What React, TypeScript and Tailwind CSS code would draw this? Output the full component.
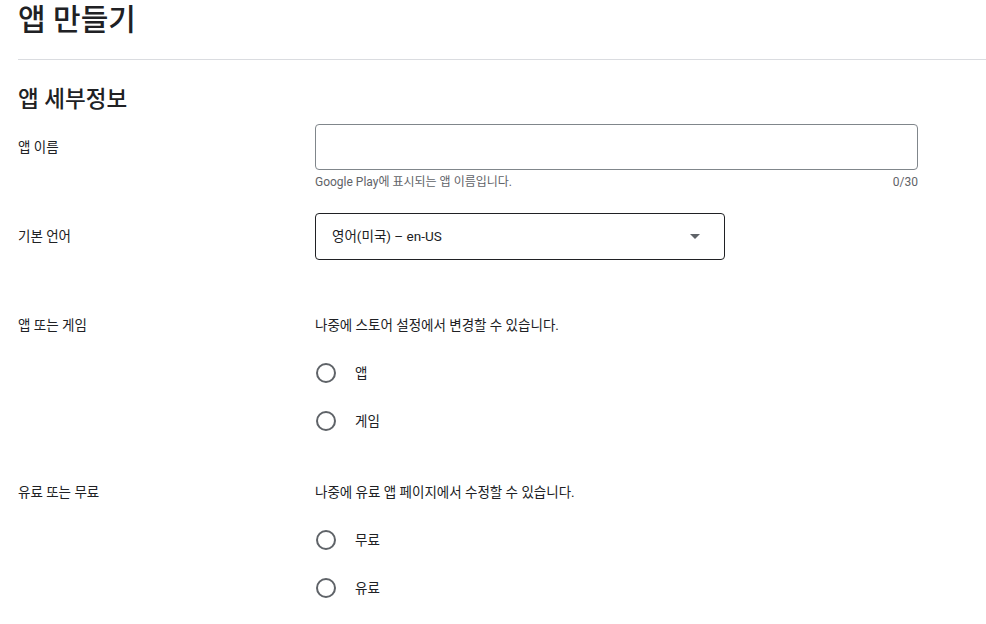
import React from "react";

const font = { fontFamily: '"Roboto", "Noto Sans CJK KR", sans-serif' };

function Radio({ label }: { label: string }) {
  return (
    <label className="flex h-12 items-center">
      <span className="ml-px flex h-5 w-5 items-center justify-center rounded-full border-2 border-[#5f6368]" />
      <span className="ml-[19px] text-[13.5px] text-[#202124]">{label}</span>
    </label>
  );
}

function Row({
  label,
  children,
  labelClass = "",
}: {
  label: string;
  children: React.ReactNode;
  labelClass?: string;
}) {
  return (
    <div className="flex">
      <div className={`w-[297px] shrink-0 text-[13.5px] leading-5 text-[#202124] ${labelClass}`}>{label}</div>
      <div className="flex-1">{children}</div>
    </div>
  );
}

export default function App() {
  return (
    <div className="min-h-screen bg-white pl-[18px] text-[#202124]" style={font}>
      <h1 className="h-10 text-[30px] leading-10 font-medium">앱 만들기</h1>
      <div className="mt-[19px] h-px bg-[#dadce0]" />

      <h2 className="mt-[25px] text-[22.5px] leading-7 font-medium">앱 세부정보</h2>

      <div className="mt-[11px]">
        <Row label="앱 이름" labelClass="pt-[13px]">
          <div className="w-[603px]">
            <input
              type="text"
              className="block h-[46px] w-full rounded border border-[#80868b] px-4 text-sm outline-none"
            />
            <div className="mt-1 flex justify-between text-xs leading-4 text-[#5f6368]">
              <span>Google Play에 표시되는 앱 이름입니다.</span>
              <span>0/30</span>
            </div>
          </div>
        </Row>
      </div>

      <div className="mt-[23px]">
        <Row label="기본 언어" labelClass="pt-[13px]">
          <div className="flex h-[47px] w-[410px] items-center justify-between rounded border border-[#202124] pr-6 pl-4">
            <span className="text-[13.5px]">영어(미국) – en-US</span>
            <svg width="10" height="5" viewBox="0 0 10 5">
              <path d="M0 0 L10 0 L5 5 Z" fill="#5f6368" />
            </svg>
          </div>
        </Row>
      </div>

      <div className="mt-[55px]">
        <Row label="앱 또는 게임">
          <p className="text-[13.5px] leading-5">나중에 스토어 설정에서 변경할 수 있습니다.</p>
          <div className="mt-[14px]">
            <Radio label="앱" />
            <Radio label="게임" />
          </div>
        </Row>
      </div>

      <div className="mt-[37px]">
        <Row label="유료 또는 무료">
          <p className="text-[13.5px] leading-5">나중에 유료 앱 페이지에서 수정할 수 있습니다.</p>
          <div className="mt-[14px]">
            <Radio label="무료" />
            <Radio label="유료" />
          </div>
        </Row>
      </div>
    </div>
  );
}
